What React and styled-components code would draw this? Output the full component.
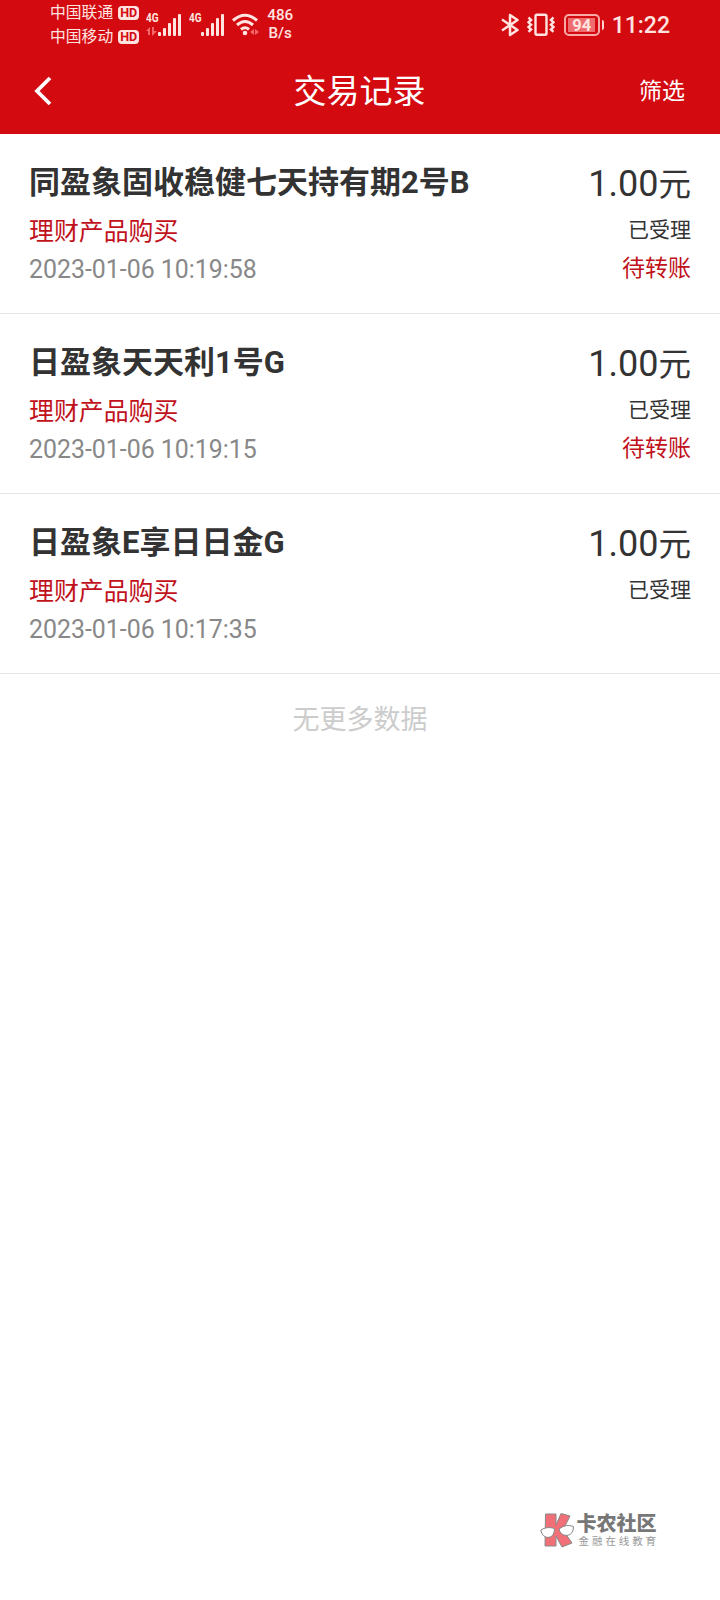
import React from "react";
import styled, { createGlobalStyle } from "styled-components";

const GlobalStyle = createGlobalStyle`
  * {
    box-sizing: border-box;
  }
  body {
    margin: 0;
    background: #fff;
    font-family: Roboto, "Noto Sans CJK SC", sans-serif;
  }
`;

const Page = styled.div`
  display: flex;
  flex-direction: column;
  width: 720px;
  height: 1600px;
  background: #fff;
`;

const StatusBar = styled.div`
  display: flex;
  justify-content: space-between;
  height: 50px;
  padding: 0 50px 0 50px;
  background: #d30a10;
  color: #ffe4e0;
`;

const StatusGroup = styled.div`
  display: flex;
  align-items: center;
  height: 50px;
`;

const Carriers = styled.div`
  display: flex;
  flex-direction: column;
  margin-right: 7px;
`;

const Carrier = styled.div`
  display: flex;
  align-items: center;
  gap: 5px;
  height: 24px;
  font-size: 15.8px;
  line-height: 24px;
`;

const HdBadge = styled.span`
  width: 21px;
  height: 14px;
  border-radius: 4px;
  background: #ffe4e0;
  color: #d30a10;
  font-size: 12.5px;
  font-weight: 700;
  line-height: 14.5px;
  text-align: center;
`;

const Signal = styled.div`
  display: flex;
  width: 36px;
  height: 24px;
  margin-right: 7px;
`;

const NetworkType = styled.div`
  width: 12px;
  font-size: 12.5px;
  font-weight: 700;
  line-height: 10px;
`;

// the network label is narrower than the normal font width
const NetworkLabel = styled.div`
  width: 16px;
  transform: scaleX(0.8);
  transform-origin: left center;
`;

const Speed = styled.div`
  width: 28px;
  margin: 0 0 2px 7px;
  font-size: 15.2px;
  font-weight: 500;
  line-height: 18px;
  text-align: center;
`;

const Battery = styled.div`
  display: flex;
  align-items: center;
  justify-content: center;
  width: 36px;
  height: 22px;
  margin: 0 0 1px 9px;
  border: 2px solid #f9aaa6;
  border-radius: 5px;
`;

const BatteryLevel = styled.div`
  width: 27px;
  height: 14px;
  background: #ee6d6e;
  font-size: 16.5px;
  font-weight: 700;
  line-height: 15px;
  text-align: center;
`;

const BatteryTip = styled.div`
  width: 2px;
  height: 10px;
  margin: 0 8px 1px 2px;
  border-radius: 0 2px 2px 0;
  background: #ffd0cc;
`;

const Clock = styled.div`
  padding-top: 1px;
  font-size: 23px;
  font-weight: 500;
  line-height: 50px;
`;

const NavBar = styled.header`
  display: grid;
  grid-template-columns: 120px 1fr 120px;
  align-items: center;
  height: 84px;
  padding: 0 35px 0 34px;
  background: #d30a10;
  color: #fff;
`;

const BackIcon = styled.svg`
  margin-bottom: 2px;
`;

const NavTitle = styled.h1`
  margin: 0;
  font-size: 33px;
  font-weight: 400;
  line-height: 48px;
  text-align: center;
`;

const FilterButton = styled.button`
  padding: 0;
  border: 0;
  background: none;
  color: #fff;
  font: inherit;
  font-size: 23px;
  line-height: 34px;
  text-align: right;
`;

const Row = styled.div`
  display: flex;
  justify-content: space-between;
  height: 180px;
  padding: 28px 29px 0;
  border-bottom: 1px solid #e4e4e4;
`;

const Column = styled.div`
  display: flex;
  flex-direction: column;
  align-items: ${(props) => (props.$right ? "flex-end" : "flex-start")};
`;

const ProductName = styled.div`
  height: 50px;
  color: #333;
  font-size: 31px;
  font-weight: 700;
  line-height: 41px;
`;

const TradeType = styled.div`
  height: 38px;
  color: #c1111b;
  font-size: 24.9px;
  line-height: 39px;
`;

const TradeTime = styled.div`
  color: #888;
  font-size: 24.9px;
  line-height: 40px;
`;

const Amount = styled.div`
  height: 48px;
  color: #333;
  font-size: 36px;
  line-height: 45px;
`;

const Unit = styled.span`
  display: inline-block;
  font-size: 32.5px;
  line-height: 40px;
`;

const Status = styled.div`
  height: 39px;
  color: #333;
  font-size: 21px;
  line-height: 40px;
`;

const Pending = styled.div`
  color: #c1111b;
  font-size: 23px;
  line-height: 40px;
`;

const NoMore = styled.div`
  padding-top: 26px;
  color: #ccc;
  font-size: 27px;
  line-height: 40px;
  text-align: center;
`;

const Watermark = styled.div`
  display: flex;
  gap: 2px;
  margin: auto 61px 50px auto;
`;

const BrandName = styled.div`
  padding-top: 1px;
  color: #777;
  font-size: 20px;
  font-weight: 900;
  line-height: 22px;
`;

const BrandSlogan = styled.div`
  padding-left: 2px;
  color: #999;
  font-size: 10.5px;
  line-height: 14px;
  letter-spacing: 2.9px;
`;

const records = [
  { name: "同盈象固收稳健七天持有期2号B", time: "2023-01-06 10:19:58", pending: true },
  { name: "日盈象天天利1号G", time: "2023-01-06 10:19:15", pending: true },
  { name: "日盈象E享日日金G", time: "2023-01-06 10:17:35", pending: false },
];

function SignalIcon({ arrows }) {
  return (
    <Signal>
      <NetworkType>
        <NetworkLabel>4G</NetworkLabel>
        {arrows && (
          <svg width="12" height="13" viewBox="0 -4 12 13" fill="#f2686a" display="block">
            <path d="M0 4l4-4v8h-2v-4zM6 0h2v4h3l-5 5z" />
          </svg>
        )}
      </NetworkType>
      <svg width="24" height="23" viewBox="0 0 24 23" fill="#ffe4e0">
        <rect x="0" y="19" width="3" height="4" rx="1" />
        <rect x="5" y="15" width="3" height="8" rx="1" />
        <rect x="10" y="10" width="3" height="13" rx="1" />
        <rect x="15" y="5" width="3" height="18" rx="1" />
        <rect x="20" y="1" width="3" height="22" rx="1" />
      </svg>
    </Signal>
  );
}

function WifiIcon() {
  return (
    <svg width="27" height="24" viewBox="0 0 27 24" fill="none" stroke="#ffe4e0" strokeWidth="3">
      <path d="M1 7.5Q13 -3 25 7.5M5 12Q13 5 21 12M9 16.5Q13 13 17 16.5" />
      <circle cx="13" cy="20" r="2.3" fill="#ffe4e0" stroke="none" />
      <path d="M18 19l4-3v6zM27 19l-4-3v6z" fill="#f2686a" stroke="none" />
    </svg>
  );
}

function BluetoothIcon() {
  return (
    <svg width="19" height="25" viewBox="0 0 19 25" fill="none" stroke="#ffe4e0" strokeWidth="2.5">
      <path d="M1 6.5L16.5 17L9 22V2L16.5 7L1 17.5" strokeLinejoin="round" />
    </svg>
  );
}

function VibrateIcon() {
  return (
    <svg width="28" height="25" viewBox="0 0 28 25" fill="none" stroke="#ffe4e0" strokeWidth="2.4">
      <rect x="8.5" y="1.8" width="11" height="20" rx="1.5" strokeWidth="2.4" />
      <path d="M1.5 4.5l2.6 2.4-2.6 2.4 2.6 2.4-2.6 2.4 2.6 2.4-2.6 2.4M26.5 4.5l-2.6 2.4 2.6 2.4-2.6 2.4 2.6 2.4-2.6 2.4 2.6 2.4" />
    </svg>
  );
}

function BrandLogo() {
  return (
    <svg width="35" height="38" viewBox="0 0 35 38" stroke="#888" strokeWidth="1">
      <path d="M5.5 2H16V13L21 1.5L30 4L23 18L32 31L22 35L16 24V34H5Z" fill="#f17077" />
      <path d="M.8 18Q7 14 14.5 16.5Q14.5 25 8 25.5Q2 25 .8 18ZM19 17Q26 11.5 33.5 14.5Q33.5 22.5 27 23.5Q20.5 23.5 19 17Z" fill="#fff" />
    </svg>
  );
}

export default function App() {
  return (
    <Page>
      <GlobalStyle />
      <StatusBar>
        <StatusGroup>
          <Carriers>
            <Carrier>
              中国联通<HdBadge>HD</HdBadge>
            </Carrier>
            <Carrier>
              中国移动<HdBadge>HD</HdBadge>
            </Carrier>
          </Carriers>
          <SignalIcon arrows />
          <SignalIcon />
          <WifiIcon />
          <Speed>
            486
            <br />
            B/s
          </Speed>
        </StatusGroup>
        <StatusGroup>
          <BluetoothIcon />
          <svg width="7" height="1" />
          <VibrateIcon />
          <Battery>
            <BatteryLevel>94</BatteryLevel>
          </Battery>
          <BatteryTip />
          <Clock>11:22</Clock>
        </StatusGroup>
      </StatusBar>
      <NavBar>
        <BackIcon width="18" height="30" viewBox="0 0 18 30" fill="none" stroke="#fff" strokeWidth="3.8">
          <path d="M16 2L3 15L16 28" />
        </BackIcon>
        <NavTitle>交易记录</NavTitle>
        <FilterButton>筛选</FilterButton>
      </NavBar>
      {records.map((item) => (
        <Row key={item.time}>
          <Column>
            <ProductName>{item.name}</ProductName>
            <TradeType>理财产品购买</TradeType>
            <TradeTime>{item.time}</TradeTime>
          </Column>
          <Column $right>
            <Amount>
              1.00<Unit>元</Unit>
            </Amount>
            <Status>已受理</Status>
            {item.pending && <Pending>待转账</Pending>}
          </Column>
        </Row>
      ))}
      <NoMore>无更多数据</NoMore>
      <Watermark>
        <BrandLogo />
        <div>
          <BrandName>卡农社区</BrandName>
          <BrandSlogan>金融在线教育</BrandSlogan>
        </div>
      </Watermark>
    </Page>
  );
}
